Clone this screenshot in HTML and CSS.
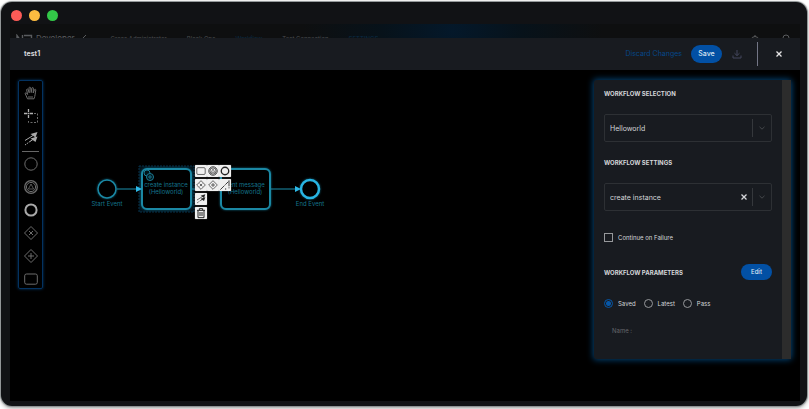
FILE: index.html
```html
<!DOCTYPE html>
<html lang="en">
<head>
<meta charset="utf-8">
<title>test1</title>
<link rel="stylesheet" href="styles.css">
</head>
<body>
<svg class="defs" width="0" height="0" aria-hidden="true">
  <symbol id="circle" viewBox="0 0 18 18"><circle cx="9" cy="9" r="6.2" fill="none" stroke="currentColor"/></symbol>
  <symbol id="middle" viewBox="0 0 18 18"><g fill="none" stroke="currentColor"><circle cx="9" cy="9" r="6.3" stroke-width="1.3"/><circle cx="9" cy="9" r="4.6"/><path d="M9 6 11.6 11H6.4z" stroke-width=".8"/></g></symbol>
  <symbol id="end" viewBox="0 0 18 18"><circle cx="9" cy="9" r="5.6" fill="none" stroke="currentColor" stroke-width="2"/></symbol>
  <symbol id="gate-x" viewBox="0 0 18 18"><path d="M9 2.5 15.5 9 9 15.5 2.5 9zM7 7l4 4M11 7l-4 4" fill="none" stroke="currentColor"/></symbol>
  <symbol id="gate-plus" viewBox="0 0 18 18"><path d="M9 2.5 15.5 9 9 15.5 2.5 9zM9 6v6M6 9h6" fill="none" stroke="currentColor"/></symbol>
  <symbol id="task" viewBox="0 0 18 18"><rect x="2.7" y="4" width="12.6" height="10.2" rx="1.8" fill="none" stroke="currentColor"/></symbol>
  <symbol id="connect" viewBox="0 0 18 18"><path d="M3 10.5 11 5.5M8 11.5l5-3.5" stroke="currentColor" fill="none"/><path d="M3 15 10 10" stroke="currentColor" stroke-dasharray="1.5 1" fill="none"/><path d="M15.5 2 13.5 7.5 8.5 4zM15.5 6.5l-2 5.5-5-3.5z" fill="currentColor"/></symbol>
  <symbol id="chevron" viewBox="0 0 8 8"><path d="M1.5 2.8 4 5.2 6.5 2.8" fill="none" stroke="currentColor"/></symbol>
  <symbol id="cross" viewBox="0 0 8 8"><path d="M1.5 1.5l5 5M6.5 1.5l-5 5" fill="none" stroke="currentColor" stroke-width="1.3"/></symbol>
</svg>

<div class="window">
  <div class="titlebar"><span class="dot red"></span><span class="dot amber"></span><span class="dot green"></span></div>
  <div class="screen">
    <div class="backdrop" aria-hidden="true">
      <svg class="logo" width="18" height="12" viewBox="0 0 18 12"><path d="M1 11V1.5L6.5 9V1M8 1.5h7.5v3.2H9.2v3H15V11" fill="none" stroke="currentColor" stroke-width="1.4"/></svg>
      <span class="brand">Developer</span>
      <svg class="back" width="6" height="10" viewBox="0 0 6 10"><path d="M5 1 1 5l4 4" fill="none" stroke="currentColor"/></svg>
      <nav class="crumbs">
        <span>Cross Administrator</span>
        <span>Black Ops</span>
        <span class="blue">Workflow</span>
        <span>Test Connection</span>
        <span class="blue">SETTINGS</span>
      </nav>
      <svg class="bell" width="12" height="12" viewBox="0 0 12 12"><path d="M2.5 9V6a3.5 3.5 0 0 1 7 0v3zM6 1v2" fill="none" stroke="currentColor"/></svg>
      <svg width="12" height="12" viewBox="0 0 12 12"><circle cx="6" cy="4" r="3" fill="none" stroke="currentColor"/></svg>
    </div>

    <header class="modal-head">
      <h1>test1</h1>
      <button class="link" type="button">Discard Changes</button>
      <button class="pill save" type="button">Save</button>
      <button class="icon download" type="button" aria-label="Download"><svg width="10" height="10" viewBox="0 0 10 10"><path d="M5 1v5.5M2.5 4.2 5 6.6l2.5-2.4M1 6.5V9h8V6.5" fill="none" stroke="currentColor"/></svg></button>
      <span class="rule"></span>
      <button class="icon close" type="button" aria-label="Close"><svg width="8" height="8"><use href="#cross"/></svg></button>
    </header>

    <main class="canvas">
      <div class="palette" role="toolbar" aria-label="Tools">
        <button type="button" aria-label="Hand tool"><svg viewBox="0 0 18 18"><path d="M5.5 14.8C4.8 12.5 3.6 11 3 9.3c.8-.8 1.8 0 2.6 1.2L4.6 5.6c.4-.9 1.3-.7 1.6 0l1 3.2-.2-5c.3-.9 1.4-.9 1.7 0l.5 4.8.7-4.6c.4-.8 1.4-.6 1.5.2L11.2 9l1.3-3.4c.6-.7 1.4-.3 1.3.5-.6 2.6-.5 5.5-1.8 8.7zM6 13h5" fill="none" stroke="currentColor"/></svg></button>
        <button type="button" aria-label="Lasso tool"><svg viewBox="0 0 18 18"><path d="M6.5 2v3M6.5 8v3M2 6.5h3M8 6.5h3M5.5 6.5h2" stroke="#b0b0b0" stroke-width="1.3"/><path d="M12 6.5h3.5v9h-9v-3" fill="none" stroke="currentColor" stroke-dasharray="2 1.5"/></svg></button>
        <button class="bright" type="button" aria-label="Connect tool"><svg><use href="#connect"/></svg></button>
        <hr>
        <button type="button" aria-label="Start event"><svg><use href="#circle"/></svg></button>
        <button type="button" aria-label="Intermediate event"><svg><use href="#middle"/></svg></button>
        <button class="bright" type="button" aria-label="End event"><svg><use href="#end"/></svg></button>
        <button type="button" aria-label="Exclusive gateway"><svg><use href="#gate-x"/></svg></button>
        <button type="button" aria-label="Parallel gateway"><svg><use href="#gate-plus"/></svg></button>
        <button type="button" aria-label="Task"><svg><use href="#task"/></svg></button>
      </div>

      <svg class="diagram" width="100%" height="100%">
        <rect class="selection" x="129" y="96" width="55" height="46"/>
        <circle class="shape" cx="97" cy="119" r="9"/>
        <rect class="shape" x="132" y="99" width="49" height="40" rx="5"/>
        <rect class="shape" x="211" y="99" width="49" height="40" rx="5"/>
        <circle class="shape final" cx="300" cy="119" r="9"/>
        <g class="flow"><path d="M107 119h20M182 119h28M261 119h25"/><path class="head" d="M126 116 132 119l-6 3zM285 116l6 3-6 3z"/></g>
        <g class="gears"><circle cx="137" cy="103" r="3"/><circle cx="140" cy="107" r="3.5"/><circle cx="140" cy="107" r="1.2"/></g>
        <g class="labels">
          <text x="97" y="136">Start Event</text>
          <text x="156" y="117">create instance</text><text x="156" y="124">(Helloworld)</text>
          <text x="235" y="117">sent message</text><text x="235" y="124">(Helloworld)</text>
          <text x="300" y="136">End Event</text>
        </g>
      </svg>

      <div class="pad">
        <button type="button" aria-label="Append task"><svg><use href="#task"/></svg></button>
        <button type="button" aria-label="Append intermediate event"><svg><use href="#middle"/></svg></button>
        <button type="button" aria-label="Append end event"><svg><use href="#end"/></svg></button>
        <button type="button" aria-label="Append exclusive gateway"><svg><use href="#gate-x"/></svg></button>
        <button type="button" aria-label="Append parallel gateway"><svg><use href="#gate-plus"/></svg></button>
        <button type="button" aria-label="Annotate"><svg viewBox="0 0 18 18"><path d="M2 16 14 4M10 16V14M15 2v12" stroke="currentColor" stroke-width="1.3" stroke-dasharray="9 1.5" fill="none"/></svg></button>
        <button class="first" type="button" aria-label="Connect"><svg><use href="#connect"/></svg></button>
        <button class="first" type="button" aria-label="Delete"><svg viewBox="0 0 18 18"><path d="M3 5h12M6.5 4.5v-2h5v2M4.5 5.5V16h9V5.5M7.5 7.5v6M10.5 7.5v6" fill="none" stroke="currentColor" stroke-width="1.5"/></svg></button>
      </div>

      <aside class="panel">
        <form class="fields">
          <h2><label for="workflow">WORKFLOW SELECTION</label></h2>
          <div class="combo">
            <select id="workflow"><option>Helloworld</option></select>
            <svg class="chevron" width="8" height="8"><use href="#chevron"/></svg>
          </div>
          <h2><label for="step">WORKFLOW SETTINGS</label></h2>
          <div class="combo">
            <select id="step"><option>create instance</option></select>
            <button class="icon clear" type="button" aria-label="Clear"><svg width="8" height="8"><use href="#cross"/></svg></button>
            <svg class="chevron" width="8" height="8"><use href="#chevron"/></svg>
          </div>
          <label class="choice continue"><input type="checkbox">Continue on Failure</label>
          <div class="params"><h2>WORKFLOW PARAMETERS</h2><button class="pill" type="button">Edit</button></div>
          <div class="radios">
            <label class="choice"><input type="radio" name="source" checked>Saved</label>
            <label class="choice"><input type="radio" name="source">Latest</label>
            <label class="choice"><input type="radio" name="source">Pass</label>
          </div>
          <p class="name">Name :</p>
        </form>
        <div class="scrollbar"></div>
      </aside>
    </main>
  </div>
</div>
</body>
</html>
```
FILE: styles.css
```css
* { box-sizing: border-box; }
body {
  margin: 0;
  padding: 2px 2px 3px 1px;
  height: 100vh;
  background: #fff;
  font: 6px/8px Inter, "Liberation Sans", sans-serif;
  color: #d4d6d9;
  overflow: hidden;
}
button { font: inherit; color: inherit; background: none; border: 0; padding: 0; }
svg { display: block; }
h1, h2, p { margin: 0; }
.defs { position: absolute; }

.window {
  display: flex;
  flex-direction: column;
  height: 100%;
  padding: 0 7px 5px 9px;
  background: #111215;
  border-radius: 11px;
  box-shadow: 0 0 1px 1px #8b9092, 0 2px 4px #999;
}
.titlebar { display: flex; align-items: center; gap: 7px; height: 22px; padding: 4px 0 0 1px; }
.dot { width: 11px; height: 11px; border-radius: 50%; }
.red { background: #fc5b57; }
.amber { background: #fdbc40; }
.green { background: #33c748; }

.screen { flex: 1; display: flex; flex-direction: column; min-height: 0; background: #000; }
.backdrop {
  display: flex;
  height: 14px;
  padding: 10px 8px 0 6px;
  overflow: hidden;
  background: radial-gradient(circle at 56% 50%, #04182a, #07121a 70px, #0e0f10 150px);
  color: #5a5c5f;
  line-height: 10px;
}
.backdrop svg { flex: none; }
.brand { font-size: 8px; line-height: 8px; margin: 0 6px 0 2px; }
.back { margin-right: 24px; }
.crumbs { display: flex; gap: 20px; font-size: 6px; line-height: 10px; white-space: nowrap; color: #4a4c4f; }
.blue { color: #0b2c45; }
.bell { margin-left: auto; margin-right: 19px; }

.modal-head {
  display: flex;
  align-items: center;
  height: 32px;
  padding: 0 17px 0 14px;
  background: #181b20;
}
.modal-head h1 { font-size: 7px; line-height: 10px; font-weight: 700; margin-right: auto; }
.link { color: #05488a; font-size: 7px; }
.pill {
  height: 16px;
  min-width: 31px;
  border-radius: 9px;
  background: #0250a4;
  color: #dbe6f2;
  font-weight: 500;
}
.save { height: 18px; margin: 0 10px 0 9px; font-size: 7px; }
.download { color: #42465c; }
.rule { width: 1px; height: 24px; margin: 0 17px 0 15px; background: #737686; }
.close { color: #e6e6e6; }

.canvas {
  position: relative;
  flex: 1;
  display: flex;
  justify-content: space-between;
  align-items: flex-start;
  padding: 10px 9px 0 8px;
  background: #000;
}
.palette {
  display: flex;
  flex-direction: column;
  align-items: center;
  gap: 5px;
  width: 25px;
  padding-top: 3px;
  border: 1px solid #033260;
  border-radius: 2px;
  box-shadow: 0 0 3px #033a6c;
  color: #6c6c6c;
}
.palette button, .palette svg { width: 18px; height: 18px; }
.palette .bright { color: #a9a9a9; }
.palette hr { width: 17px; height: 1px; margin: -2px 0; border: 0; background: #666; }

.diagram { position: absolute; inset: 0; pointer-events: none; }
.shape { fill: #000; stroke: #1b88a4; stroke-width: 2; filter: drop-shadow(0 0 1px #0c637c); }
circle.shape { stroke-width: 1.5; }
circle.final { stroke: #28b5e4; stroke-width: 2.5; }
.selection { fill: #02121b; stroke: #07334c; stroke-dasharray: 2 1; }
.flow { fill: none; stroke: #1b8fac; }
.head { fill: #2cb9e8; stroke: none; }
.gears { fill: #02141a; stroke: #1a7c95; }
.labels { fill: #14748b; text-anchor: middle; }

.pad {
  position: absolute;
  left: 185px;
  top: 95px;
  display: grid;
  grid-template-columns: repeat(3, 12px);
  grid-auto-rows: 12px;
  row-gap: 2px;
}
.pad button { background: #f0f0f0; color: #242424; border-radius: 1px; box-shadow: 0 0 1px #ccc; }
.pad svg { width: 12px; height: 12px; }
.pad .first { grid-column: 1; }

.panel {
  position: relative;
  display: flex;
  width: 197px;
  height: 279px;
  background: #181b20;
  border-radius: 3px;
  box-shadow: 0 0 6px 1px #034273;
}
.fields { flex: 1; padding: 9px 10px 0; }
.scrollbar { width: 9px; background: #2c2c2c; }
h2 { font-size: 6px; line-height: 9px; font-weight: 700; }
.combo {
  display: flex;
  align-items: center;
  height: 28px;
  margin: 16px 0 16px;
  padding-right: 5px;
  border: 1px solid #2d3034;
  border-radius: 2px;
}
select {
  flex: 1;
  height: 100%;
  padding: 0 5px;
  appearance: none;
  border: 0;
  background: none;
  color: inherit;
  font: 7px/9px Inter, "Liberation Sans", sans-serif;
}
.clear { margin-right: 4px; }
.chevron { box-sizing: content-box; height: 8px; padding: 5px 0 5px 5px; border-left: 1px solid #35383c; color: #44474b; }
.choice { display: flex; align-items: center; gap: 5px; }
input { appearance: none; width: 9px; height: 9px; margin: 0; border: 1px solid #96989b; }
input[type="radio"] { border-radius: 50%; }
input:checked { border-color: #0657a8; background: radial-gradient(circle, #0657a8 2px, transparent 3px); }
.continue { margin-top: 22px; height: 9px; }
.params { display: flex; justify-content: space-between; align-items: center; margin-top: 22px; }
.radios { display: flex; gap: 8px; margin-top: 19px; }
.name { margin: 19px 0 0 8px; color: #66686c; }
```
